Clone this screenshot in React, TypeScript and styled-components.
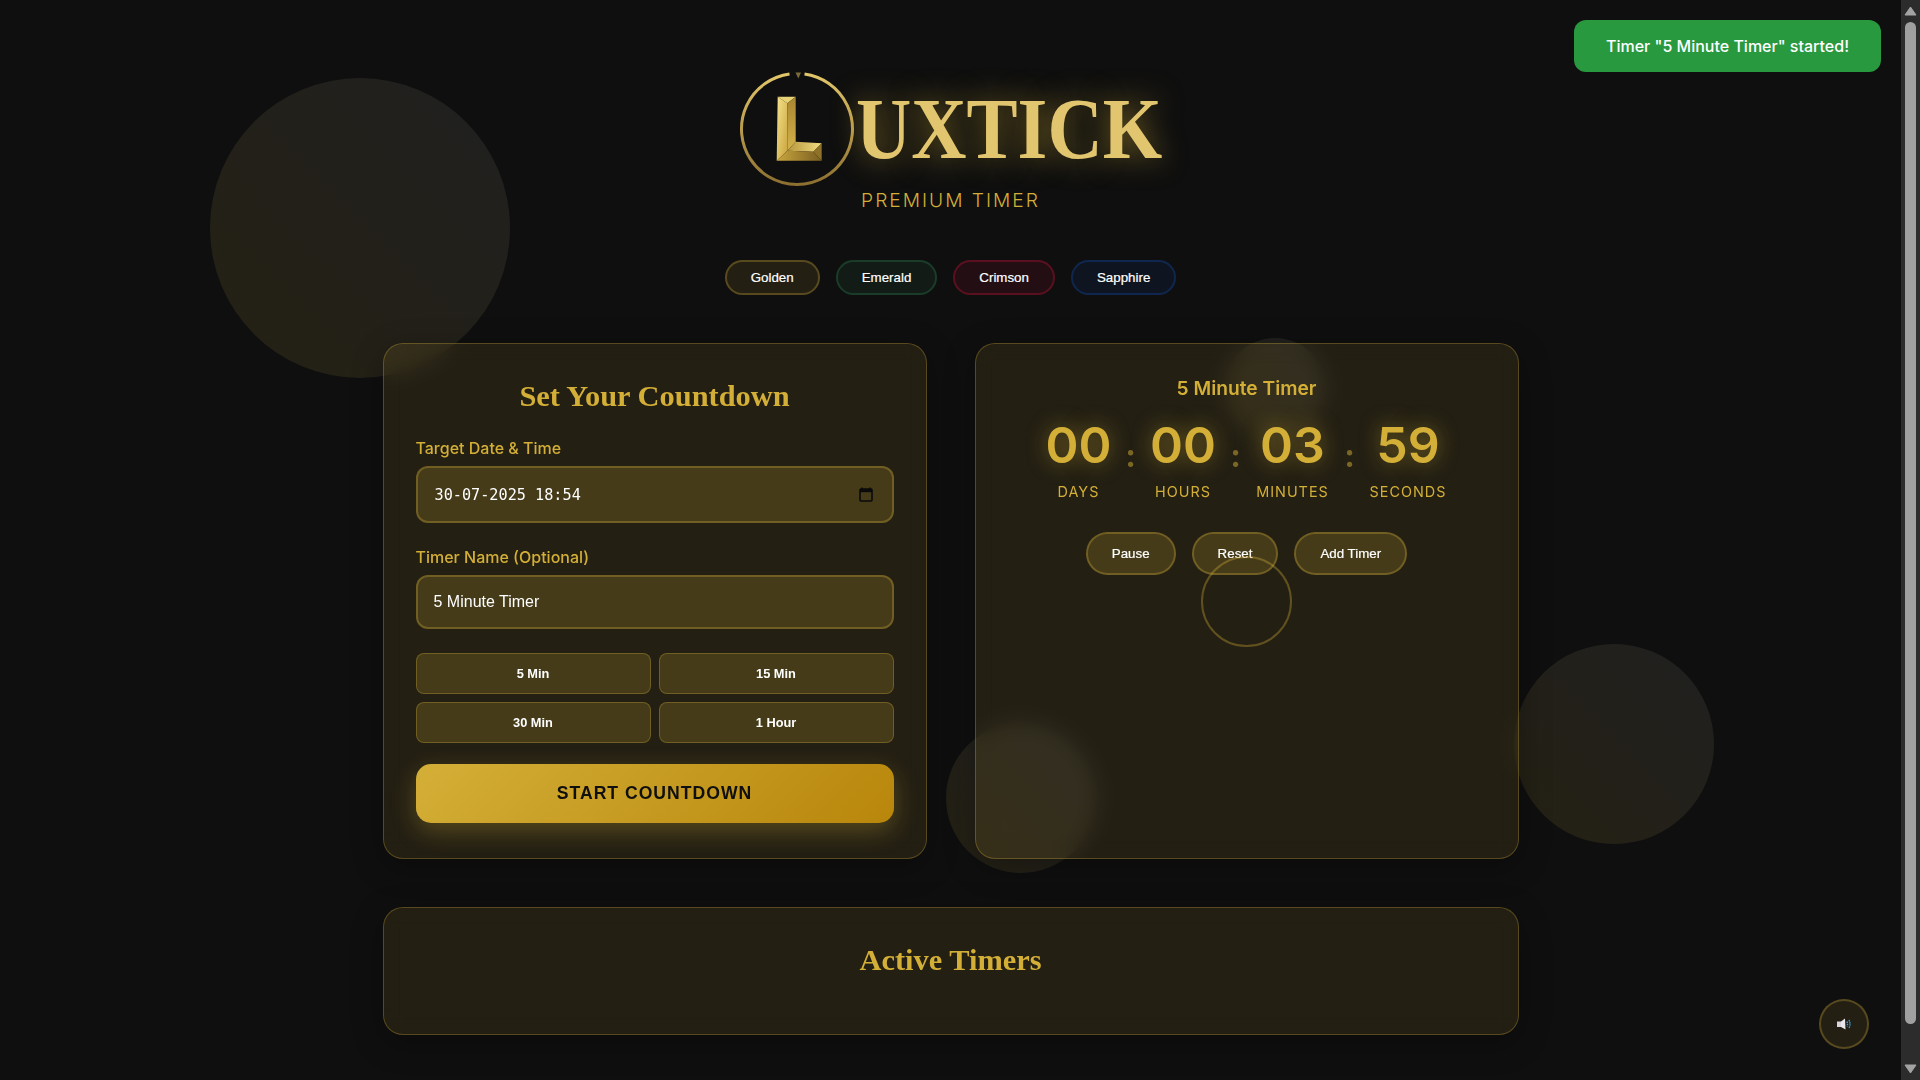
import React from 'react';
import styled, { createGlobalStyle } from 'styled-components';

const GlobalStyle = createGlobalStyle`
  body {
    margin: 0;
    background: #0f0f0f;
    color: #ffffff;
    font-family: Inter, "Liberation Sans", sans-serif;
  }

  * {
    box-sizing: border-box;
  }
`;

const Page = styled.div`
  position: relative;
  margin-right: 19px;
  padding: 69px 32px 82px;
  overflow: hidden;
`;

const Orb = styled.div<{ $x: number; $y: number; $size: number }>`
  position: absolute;
  left: ${(p) => p.$x - p.$size / 2}px;
  top: ${(p) => p.$y - p.$size / 2}px;
  width: ${(p) => p.$size}px;
  height: ${(p) => p.$size}px;
  border-radius: 50%;
  background: linear-gradient(45deg, rgba(212, 175, 55, 0.11), rgba(255, 255, 255, 0.07));
`;

const PulseRing = styled.div`
  position: absolute;
  left: 1201px;
  top: 556px;
  width: 91px;
  height: 91px;
  border-radius: 50%;
  border: 2px solid rgba(212, 175, 55, 0.35);
  z-index: 5;
  pointer-events: none;
`;

const Content = styled.div`
  position: relative;
  max-width: 1136px;
  margin: 0 auto;
`;

const Header = styled.header`
  display: flex;
  flex-direction: column;
  align-items: center;
`;

const LogoRow = styled.div`
  display: flex;
  align-items: flex-start;
  height: 120px;
  margin-left: -3px;
`;

const LogoText = styled.h1`
  margin: 12px -38px 0 0;
  font-family: "Liberation Serif", serif;
  font-size: 86px;
  font-weight: 700;
  line-height: 96px;
  color: #e2c66f;
  text-shadow: 0 0 30px rgba(212, 175, 55, 0.55);
  transform: scaleX(0.89);
  transform-origin: left center;
`;

const Tagline = styled.p`
  margin: 0;
  font-size: 19.2px;
  font-weight: 300;
  line-height: 23px;
  letter-spacing: 2px;
  color: #d4af37;
`;

const ThemeRow = styled.div`
  display: flex;
  justify-content: center;
  gap: 16px;
  margin-top: 48px;
`;

const tones = {
  golden: '212, 175, 55',
  emerald: '46, 139, 87',
  crimson: '220, 20, 60',
  sapphire: '15, 82, 186',
} as const;

const ThemePill = styled.button<{ $tone: keyof typeof tones }>`
  height: 35px;
  padding: 0 24px;
  border-radius: 25px;
  border: 2px solid rgba(${(p) => tones[p.$tone]}, 0.3);
  background: rgba(${(p) => tones[p.$tone]}, 0.1);
  color: #ffffff;
  font-family: "Liberation Sans", Arial, sans-serif;
  font-size: 13.33px;
  font-weight: 400;
  -webkit-text-stroke: 0.2px #ffffff;
`;

const PanelGrid = styled.div`
  display: grid;
  grid-template-columns: 1fr 1fr;
  gap: 48px;
  margin-top: 48px;
`;

const Panel = styled.section`
  background: rgba(212, 175, 55, 0.1);
  border: 1px solid rgba(212, 175, 55, 0.3);
  border-radius: 20px;
  backdrop-filter: blur(10px);
  box-shadow: 0 8px 32px rgba(0, 0, 0, 0.3);
`;

const FormPanel = styled(Panel)`
  height: 516px;
  padding: 32px;
`;

const TimerPanel = styled(Panel)`
  height: 516px;
  padding: 32px;
  display: flex;
  flex-direction: column;
  align-items: center;
`;

const PanelTitle = styled.h2`
  margin: 0;
  font-family: "Liberation Serif", serif;
  font-size: 30.4px;
  font-weight: 700;
  line-height: 40px;
  text-align: center;
  color: #d4af37;
`;

const FieldLabel = styled.label`
  display: block;
  font-size: 16px;
  font-weight: 500;
  line-height: 19px;
  color: #d4af37;
`;

const FieldBox = styled.div<{ $height: number }>`
  display: flex;
  align-items: center;
  height: ${(p) => p.$height}px;
  margin-top: 8px;
  padding: 0 19px 0 16px;
  background: rgba(212, 175, 55, 0.2);
  border: 2px solid rgba(212, 175, 55, 0.3);
  border-radius: 12px;
`;

const TextInput = styled.input`
  flex: 1;
  min-width: 0;
  padding: 0;
  border: 0;
  outline: 0;
  background: transparent;
  color: #ffffff;
  font-family: "Liberation Sans", Arial, sans-serif;
  font-size: 16px;
`;

const DateInput = styled(TextInput)`
  padding-left: 1px;
  font-family: "DejaVu Sans Mono", monospace;
  font-size: 15.2px;
`;

const FieldGroup = styled.div<{ $gap: number }>`
  margin-top: ${(p) => p.$gap}px;
`;

const PresetGrid = styled.div`
  display: grid;
  grid-template-columns: 1fr 1fr;
  gap: 8px;
  margin-top: 24px;
`;

const PresetButton = styled.button`
  height: 41px;
  background: rgba(212, 175, 55, 0.2);
  border: 1px solid rgba(212, 175, 55, 0.3);
  border-radius: 8px;
  color: #ffffff;
  font-family: "Liberation Sans", Arial, sans-serif;
  font-size: 12.8px;
  font-weight: 700;
`;

const StartButton = styled.button`
  display: block;
  width: 100%;
  height: 59px;
  margin-top: 21px;
  border: 0;
  border-radius: 15px;
  background: linear-gradient(135deg, #d4af37, #b8860b);
  box-shadow: 0 8px 25px rgba(212, 175, 55, 0.3);
  color: #0f0f0f;
  font-family: "Liberation Sans", Arial, sans-serif;
  font-size: 17.6px;
  font-weight: 700;
  letter-spacing: 1px;
`;

const TimerName = styled.h3`
  margin: 0;
  font-size: 19.2px;
  font-weight: 600;
  line-height: 24px;
  color: #d4af37;
`;

const CountRow = styled.div`
  display: flex;
  justify-content: center;
  margin-top: 14px;
`;

const CountUnit = styled.div<{ $width: number }>`
  width: ${(p) => p.$width}px;
  display: flex;
  flex-direction: column;
  align-items: center;
`;

const CountValue = styled.span`
  font-size: 50px;
  font-weight: 600;
  line-height: 62px;
  color: #d4af37;
  text-shadow: 0 0 20px rgba(212, 175, 55, 0.5);
`;

const CountLabel = styled.span`
  margin-top: 7px;
  font-size: 14.4px;
  font-weight: 400;
  line-height: 17px;
  letter-spacing: 1px;
  color: #d4af37;
  white-space: nowrap;
`;

const CountColon = styled.span`
  width: 20px;
  margin-top: 11px;
  font-size: 32px;
  font-weight: 700;
  line-height: 62px;
  text-align: center;
  color: #d4af37;
  opacity: 0.5;
`;

const ControlRow = styled.div`
  display: flex;
  justify-content: center;
  gap: 16px;
  margin-top: 32px;
`;

const ControlButton = styled.button`
  height: 43px;
  padding: 0 24px;
  background: rgba(212, 175, 55, 0.2);
  border: 2px solid rgba(212, 175, 55, 0.3);
  border-radius: 25px;
  color: #ffffff;
  font-family: "Liberation Sans", Arial, sans-serif;
  font-size: 13.33px;
  font-weight: 400;
  -webkit-text-stroke: 0.2px #ffffff;
`;

const ActivePanel = styled(Panel)`
  height: 128px;
  margin-top: 48px;
  padding: 32px 32px 0;
`;

const Toast = styled.div`
  position: fixed;
  top: 20px;
  right: 39px;
  padding: 16px 32px;
  border-radius: 12px;
  background: #28993f;
  color: #ffffff;
  font-size: 16px;
  font-weight: 500;
  line-height: 20px;
  z-index: 10;
`;

const SoundButton = styled.button`
  position: fixed;
  right: 51px;
  bottom: 31px;
  width: 50px;
  height: 50px;
  display: flex;
  align-items: center;
  justify-content: center;
  padding: 0;
  border-radius: 50%;
  border: 2px solid rgba(212, 175, 55, 0.3);
  background: rgba(212, 175, 55, 0.1);
  z-index: 10;
`;

/* headless run has no native scrollbar, so the rail is drawn */
const ScrollRail = styled.div`
  position: fixed;
  top: 0;
  right: 0;
  bottom: 0;
  width: 19px;
  display: flex;
  flex-direction: column;
  align-items: center;
  background: #2c2c2c;
  z-index: 20;
`;

const ScrollArrow = styled.svg`
  flex: none;
  width: 13px;
  height: 10px;
  margin: 6px 0;
`;

const ScrollThumb = styled.div`
  flex: none;
  width: 11px;
  height: 1002px;
  border-radius: 6px;
  background: #a0a0a0;
`;

const RailSpacer = styled.div`
  flex: 1;
`;

const LogoMark = () => (
  <svg width="120" height="120" viewBox="-1 0 120 120">
    <defs>
      <linearGradient id="ring" x1="0" y1="0" x2="0" y2="1">
        <stop offset="0" stopColor="#e2c66b" />
        <stop offset="1" stopColor="#8d7030" />
      </linearGradient>
      <linearGradient id="faceLeft" x1="0" y1="0" x2="1" y2="1">
        <stop offset="0" stopColor="#f5e38c" />
        <stop offset="1" stopColor="#c9a33c" />
      </linearGradient>
      <linearGradient id="faceRight" x1="0" y1="0" x2="0" y2="1">
        <stop offset="0" stopColor="#a78632" />
        <stop offset="1" stopColor="#d4b24a" />
      </linearGradient>
      <linearGradient id="faceFoot" x1="0" y1="0" x2="1" y2="0">
        <stop offset="0" stopColor="#b6963c" />
        <stop offset="1" stopColor="#f2dc80" />
      </linearGradient>
      <linearGradient id="faceBase" x1="0" y1="0" x2="1" y2="0">
        <stop offset="0" stopColor="#c9a63f" />
        <stop offset="1" stopColor="#7a5f20" />
      </linearGradient>
    </defs>
    <path d="M67.5 5 A55.5 55.5 0 1 1 52.5 5" fill="none" stroke="url(#ring)" strokeWidth="3" />
    <polygon points="58.5,3.5 64,3.5 61.3,9.5" fill="#7d6a3a" />
    <polygon points="40.7,27.7 50.3,34.3 50.3,81.7 39.7,91.7" fill="url(#faceLeft)" />
    <polygon points="40.7,27.7 58.7,27.7 50.3,34.3" fill="#e8d276" />
    <polygon points="58.7,27.7 58.7,72.7 50.3,81.7 50.3,34.3" fill="url(#faceRight)" />
    <polygon points="58.7,72.7 84.7,74.3 76.3,82.7 50.3,81.7" fill="url(#faceFoot)" />
    <polygon points="84.7,74.3 84.7,91.7 76.3,82.7" fill="#8f7228" />
    <polygon points="50.3,81.7 76.3,82.7 84.7,91.7 39.7,91.7" fill="url(#faceBase)" />
  </svg>
);

const CalendarIcon = () => (
  <svg width="14" height="15" viewBox="0 0 14 15">
    <path d="M3 0.5 V2 M11 0.5 V2" stroke="#0a0a0a" strokeWidth="1.6" />
    <rect x="1" y="2" width="12" height="12" rx="1" fill="none" stroke="#0a0a0a" strokeWidth="1.6" />
    <rect x="1" y="2" width="12" height="3.2" fill="#0a0a0a" />
  </svg>
);

const SpeakerIcon = () => (
  <svg width="14" height="12" viewBox="0 0 14 12">
    <rect x="0" y="3.5" width="4" height="5.5" fill="#d9d4dc" />
    <polygon points="4,3.5 8,0.5 8.5,11.5 4,9" fill="#e9e6ec" />
    <path d="M10 3.5 Q11 6 10 8.5 M12 2 Q14 6 12 10" fill="none" stroke="#3a9be0" strokeWidth="1.4" strokeDasharray="1.5 0.7" />
  </svg>
);

const units = [
  { value: '00', label: 'DAYS', width: 84 },
  { value: '00', label: 'HOURS', width: 85 },
  { value: '03', label: 'MINUTES', width: 94 },
  { value: '59', label: 'SECONDS', width: 97 },
];

const presets = ['5 Min', '15 Min', '30 Min', '1 Hour'];

const App: React.FC = () => {
  return (
    <>
      <GlobalStyle />
      <Page>
        <Orb $x={360} $y={228} $size={300} />
        <Orb $x={1275} $y={388} $size={100} />
        <Orb $x={1021} $y={798} $size={150} />
        <Orb $x={1614} $y={744} $size={200} />

        <Content>
          <Header>
            <LogoRow>
              <LogoMark />
              <LogoText>UXTICK</LogoText>
            </LogoRow>
            <Tagline>PREMIUM TIMER</Tagline>
          </Header>

          <ThemeRow>
            <ThemePill $tone="golden">Golden</ThemePill>
            <ThemePill $tone="emerald">Emerald</ThemePill>
            <ThemePill $tone="crimson">Crimson</ThemePill>
            <ThemePill $tone="sapphire">Sapphire</ThemePill>
          </ThemeRow>

          <PanelGrid>
            <FormPanel>
              <PanelTitle>Set Your Countdown</PanelTitle>
              <FieldGroup $gap={23}>
                <FieldLabel>Target Date &amp; Time</FieldLabel>
                <FieldBox $height={57}>
                  <DateInput readOnly value="30-07-2025 18:54" />
                  <CalendarIcon />
                </FieldBox>
              </FieldGroup>
              <FieldGroup $gap={25}>
                <FieldLabel>Timer Name (Optional)</FieldLabel>
                <FieldBox $height={54}>
                  <TextInput readOnly value="5 Minute Timer" />
                </FieldBox>
              </FieldGroup>
              <PresetGrid>
                {presets.map((preset) => (
                  <PresetButton key={preset}>{preset}</PresetButton>
                ))}
              </PresetGrid>
              <StartButton>START COUNTDOWN</StartButton>
            </FormPanel>

            <TimerPanel>
              <TimerName>5 Minute Timer</TimerName>
              <CountRow>
                {units.map((unit, index) => (
                  <React.Fragment key={unit.label}>
                    {index > 0 && <CountColon>:</CountColon>}
                    <CountUnit $width={unit.width}>
                      <CountValue>{unit.value}</CountValue>
                      <CountLabel>{unit.label}</CountLabel>
                    </CountUnit>
                  </React.Fragment>
                ))}
              </CountRow>
              <ControlRow>
                <ControlButton>Pause</ControlButton>
                <ControlButton>Reset</ControlButton>
                <ControlButton>Add Timer</ControlButton>
              </ControlRow>
            </TimerPanel>
          </PanelGrid>

          <ActivePanel>
            <PanelTitle>Active Timers</PanelTitle>
          </ActivePanel>
        </Content>

        <PulseRing />
      </Page>

      <Toast>Timer "5 Minute Timer" started!</Toast>
      <SoundButton>
        <SpeakerIcon />
      </SoundButton>

      <ScrollRail>
        <ScrollArrow viewBox="0 0 13 10">
          <path d="M6.5 1 L12 9 H1 Z" fill="#a3a3a3" stroke="#a3a3a3" strokeLinejoin="round" />
        </ScrollArrow>
        <ScrollThumb />
        <RailSpacer />
        <ScrollArrow viewBox="0 0 13 10">
          <path d="M1 1 H12 L6.5 9 Z" fill="#a3a3a3" stroke="#a3a3a3" strokeLinejoin="round" />
        </ScrollArrow>
      </ScrollRail>
    </>
  );
};

export default App;
